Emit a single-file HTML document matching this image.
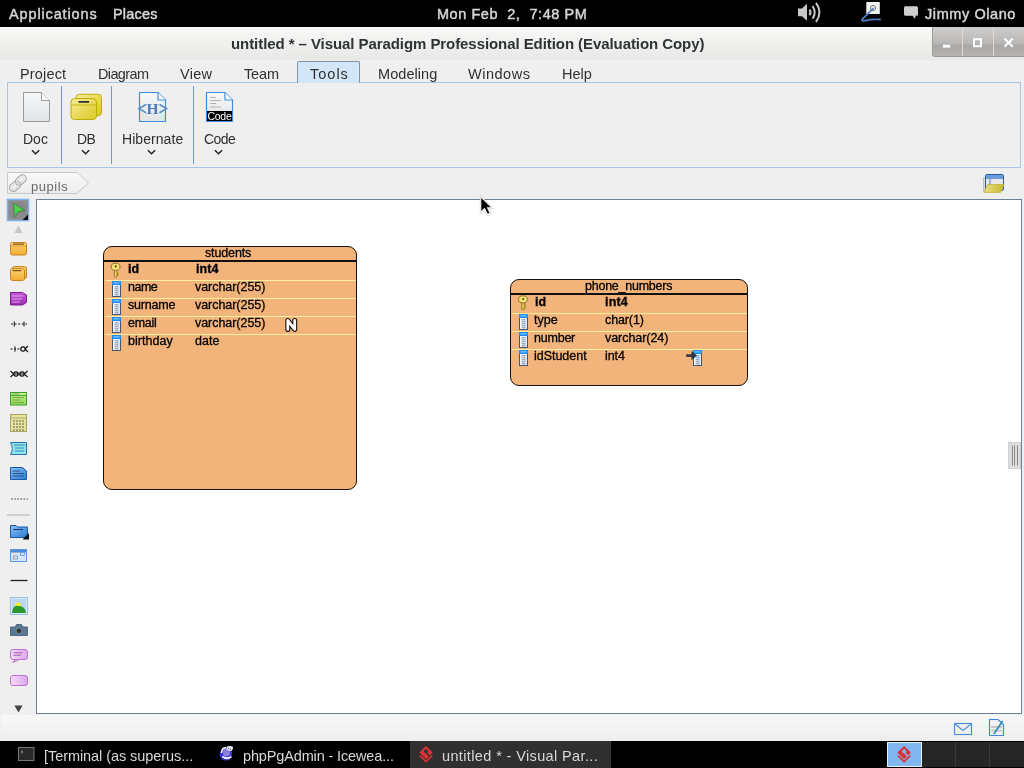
<!DOCTYPE html><html><head><meta charset="utf-8"><style>
*{margin:0;padding:0;box-sizing:border-box}
html,body{width:1024px;height:768px;overflow:hidden;background:#efefef;font-family:"Liberation Sans",sans-serif;position:relative}
.t{position:absolute;white-space:nowrap;will-change:transform}
.a{position:absolute}
svg{position:absolute;overflow:visible}
</style></head><body>
<div class="a" style="left:0;top:0;width:1024px;height:27px;background:#000"></div>
<div class="t" style="left:8.80px;top:7.00px;font-size:14.5px;line-height:14.5px;color:#d6d6d6;letter-spacing:0.864px;-webkit-text-stroke:0.45px #d6d6d6;">Applications</div>
<div class="t" style="left:113.30px;top:7.00px;font-size:14.5px;line-height:14.5px;color:#d6d6d6;letter-spacing:0.200px;-webkit-text-stroke:0.45px #d6d6d6;">Places</div>
<div class="t" style="left:436.70px;top:7.00px;font-size:14.5px;line-height:14.5px;color:#d6d6d6;letter-spacing:0.542px;white-space:pre;-webkit-text-stroke:0.45px #d6d6d6;">Mon Feb  2,  7:48 PM</div>
<div class="t" style="left:924.60px;top:7.00px;font-size:14.5px;line-height:14.5px;color:#d6d6d6;letter-spacing:0.580px;-webkit-text-stroke:0.45px #d6d6d6;">Jimmy Olano</div>
<svg style="left:0;top:0" width="1024" height="27">
<path d="M798 8.5 H802 L807 3.8 V20.8 L802 16.2 H798 Z" fill="#c8c8c8"/>
<path d="M809.5 9.5 Q811.5 12.3 809.5 15.2" stroke="#c8c8c8" stroke-width="2" fill="none"/>
<path d="M812.5 6 Q817 12.3 812.5 18.8" stroke="#c8c8c8" stroke-width="2" fill="none"/>
<path d="M816 2.8 Q823 12.3 816 21.8" stroke="#c8c8c8" stroke-width="2" fill="none"/>
<rect x="866.3" y="2" width="13.5" height="12" fill="#f2f2f2"/>
<circle cx="873" cy="8" r="2.6" fill="none" stroke="#777" stroke-width="1"/>
<path d="M873 8.5 Q868 14 862.5 19 Q861 21 864 20.8 Q872 19 880 19.5" stroke="#4f7ec0" stroke-width="1.8" fill="none" stroke-linecap="round"/>
<path d="M905.5 6.2 H916.5 Q918 6.2 918 7.7 V14.2 Q918 15.7 916.5 15.7 H915.5 L915 19 L912.5 15.7 H905.5 Q904 15.7 904 14.2 V7.7 Q904 6.2 905.5 6.2 Z" fill="#cfcfcf"/>
</svg>
<div class="a" style="left:0;top:27px;width:1024px;height:33px;background:linear-gradient(#f9f9f8,#f1f1f0 40%,#e9e8e7)"></div>
<div class="t" style="left:230.50px;top:36.00px;font-size:15px;line-height:15px;color:#2e3436;font-weight:bold;letter-spacing:-0.071px;">untitled * – Visual Paradigm Professional Edition (Evaluation Copy)</div>
<div class="a" style="left:932px;top:27px;width:92px;height:30px;border-bottom-left-radius:4px;background:linear-gradient(#cfcecc,#b8b7b5 55%,#a9a8a6 60%,#b5b4b2);box-shadow:inset 1px 0 0 #9a9997, inset 0 -1px 0 #9a9997"></div>
<div class="a" style="left:962px;top:27px;width:1px;height:29px;background:#dcdbd9"></div>
<div class="a" style="left:993px;top:27px;width:1px;height:29px;background:#dcdbd9"></div>
<svg style="left:0;top:0" width="1024" height="60">
<rect x="943" y="44.8" width="7.2" height="2.8" fill="#fff"/>
<rect x="974" y="39.2" width="7" height="7" fill="none" stroke="#fff" stroke-width="2"/>
<path d="M1004.5 38.5 L1012.7 46.7 M1012.7 38.5 L1004.5 46.7" stroke="#fff" stroke-width="2"/>
</svg>
<div class="a" style="left:7px;top:82px;width:1014px;height:86px;border:1px solid #a9c6e6;"></div>
<div class="a" style="left:297px;top:61px;width:63px;height:22px;background:#d3e6f8;border:1px solid #7d93ab;border-bottom:none;border-radius:2px 2px 0 0"></div>
<div class="t" style="left:19.90px;top:67.00px;font-size:14.5px;line-height:14.5px;color:#303030;letter-spacing:0.167px;">Project</div>
<div class="t" style="left:98.20px;top:67.00px;font-size:14.5px;line-height:14.5px;color:#303030;letter-spacing:-0.633px;">Diagram</div>
<div class="t" style="left:180.20px;top:67.00px;font-size:14.5px;line-height:14.5px;color:#303030;letter-spacing:0.267px;">View</div>
<div class="t" style="left:243.80px;top:67.00px;font-size:14.5px;line-height:14.5px;color:#303030;letter-spacing:-0.167px;">Team</div>
<div class="t" style="left:309.50px;top:67.00px;font-size:14.5px;line-height:14.5px;color:#303030;letter-spacing:1.000px;">Tools</div>
<div class="t" style="left:378.20px;top:67.00px;font-size:14.5px;line-height:14.5px;color:#303030;letter-spacing:0.057px;">Modeling</div>
<div class="t" style="left:468.40px;top:67.00px;font-size:14.5px;line-height:14.5px;color:#303030;letter-spacing:0.517px;">Windows</div>
<div class="t" style="left:562.20px;top:67.00px;font-size:14.5px;line-height:14.5px;color:#303030;letter-spacing:0.033px;">Help</div>
<div class="a" style="left:61px;top:86px;width:1px;height:78px;background:#7397d3"></div>
<div class="a" style="left:111px;top:86px;width:1px;height:78px;background:#7397d3"></div>
<div class="a" style="left:193px;top:86px;width:1px;height:78px;background:#7397d3"></div>
<div class="t" style="left:23.40px;top:132.00px;font-size:14px;line-height:14px;color:#303030;">Doc</div>
<div class="t" style="left:76.70px;top:132.00px;font-size:14px;line-height:14px;color:#303030;letter-spacing:-0.700px;">DB</div>
<div class="t" style="left:121.60px;top:132.00px;font-size:14px;line-height:14px;color:#303030;letter-spacing:0.062px;">Hibernate</div>
<div class="t" style="left:203.70px;top:132.00px;font-size:14px;line-height:14px;color:#303030;letter-spacing:-0.567px;">Code</div>
<svg style="left:0;top:0" width="1024" height="170"><path d="M32.0 150.3 L35.6 153.8 L39.2 150.3" stroke="#222" stroke-width="1.5" fill="none"/><path d="M82.0 150.3 L85.6 153.8 L89.19999999999999 150.3" stroke="#222" stroke-width="1.5" fill="none"/><path d="M147.9 150.3 L151.5 153.8 L155.1 150.3" stroke="#222" stroke-width="1.5" fill="none"/><path d="M214.9 150.3 L218.5 153.8 L222.1 150.3" stroke="#222" stroke-width="1.5" fill="none"/></svg>
<svg style="left:0;top:0" width="1024" height="170">
<defs>
<linearGradient id="gdoc" x1="0" y1="0" x2="0" y2="1"><stop offset="0" stop-color="#f7f8fa"/><stop offset="1" stop-color="#e2e3e4"/></linearGradient>
<linearGradient id="gdb" x1="0" y1="0" x2="1" y2="1"><stop offset="0" stop-color="#f6ec9a"/><stop offset="1" stop-color="#dcc820"/></linearGradient>
</defs>
<path d="M23.5 92.5 H41.5 L49.5 100.5 V121.5 H23.5 Z" fill="url(#gdoc)" stroke="#9a9a9a" stroke-width="1"/>
<path d="M41.5 92.5 V100.5 H49.5" fill="#fafafa" stroke="#9a9a9a" stroke-width="1"/>
<!-- DB -->
<rect x="76" y="94.3" width="25.5" height="21.5" rx="3.5" fill="url(#gdb)" stroke="#bfae08" stroke-width="1"/>
<rect x="71" y="98.5" width="25.5" height="21" rx="3.5" fill="url(#gdb)" stroke="#bfae08" stroke-width="1"/>
<line x1="71" y1="105" x2="96.5" y2="105" stroke="#c9b614" stroke-width="1"/>
<rect x="78.5" y="101" width="10.5" height="1.8" fill="#333"/>
<!-- Hibernate -->
<path d="M139.5 92.5 H158 L165.5 100 V121.5 H139.5 Z" fill="url(#gdoc)" stroke="#3f8fe0" stroke-width="1.2"/>
<path d="M158 92.5 V100 H165.5" fill="#fafafa" stroke="#3f8fe0" stroke-width="1.2"/>
<path d="M146 104.5 L139 108.6 L146 112.7 M159.5 104.5 L166.5 108.6 L159.5 112.7" stroke="#5a8ac4" stroke-width="1.6" fill="none"/>
<text x="152.6" y="113.8" font-family="Liberation Serif" font-weight="bold" font-size="15.5" fill="#4a7cbf" text-anchor="middle">H</text>
<!-- Code -->
<path d="M206.5 92.5 H225 L232.5 100 V121.5 H206.5 Z" fill="url(#gdoc)" stroke="#3f8fe0" stroke-width="1.2"/>
<path d="M225 92.5 V100 H232.5" fill="#fafafa" stroke="#3f8fe0" stroke-width="1.2"/>
<path d="M210 97.5 H216 M210 100.5 H221 M210 103.5 H216 M210 107 H221" stroke="#aaa" stroke-width="0.9"/>
<rect x="207" y="111" width="25" height="10" fill="#000"/>
<text x="219.5" y="120" font-family="Liberation Sans" font-size="10.5" fill="#fff" text-anchor="middle" letter-spacing="-0.3">Code</text>
</svg>
<svg style="left:0;top:0" width="1024" height="200">
<defs><linearGradient id="gbc" x1="0" y1="0" x2="0" y2="1"><stop offset="0" stop-color="#fafafa"/><stop offset="1" stop-color="#ececec"/></linearGradient></defs>
<path d="M7.5 172.5 H77 L88.5 183 L77 193.5 H7.5 Z" fill="url(#gbc)" stroke="#c4c8cc" stroke-width="1"/>
<g fill="none" stroke="#a4a4a4" stroke-width="1.1">
<rect x="14.8" y="176.3" width="12" height="7.6" rx="3.8" transform="rotate(-40 20.8 180.1)"/>
<rect x="9" y="182.4" width="12" height="7.6" rx="3.8" transform="rotate(-40 15 186.2)"/>
</g>
<g fill="none" stroke="#d0d0d0" stroke-width="0.8">
<rect x="16.8" y="178.3" width="8" height="3.6" rx="1.8" transform="rotate(-40 20.8 180.1)"/>
<rect x="11" y="184.4" width="8" height="3.6" rx="1.8" transform="rotate(-40 15 186.2)"/>
</g>
</svg>
<div class="t" style="left:31.40px;top:180.00px;font-size:13px;line-height:13px;color:#6a6a6a;letter-spacing:0.560px;height:21px;overflow:hidden;">pupils</div>
<svg style="left:0;top:0" width="1024" height="200">
<defs><linearGradient id="gfy" x1="0" y1="0" x2="1" y2="0"><stop offset="0" stop-color="#e9df7a"/><stop offset="1" stop-color="#c9b830"/></linearGradient></defs>
<rect x="985.5" y="174.5" width="18" height="16" rx="1.5" fill="#e8e8e8" stroke="#2a5d9a" stroke-width="1"/>
<rect x="986" y="175" width="17" height="4" fill="#6d9ad8"/>
<line x1="990" y1="179" x2="990" y2="190" stroke="#2a5d9a" stroke-width="0.8"/>
<path d="M984 192.5 L987.5 184.5 H1004 L1000.5 192.5 Z" fill="url(#gfy)" stroke="#b8a820" stroke-width="0.6"/>
<line x1="983.8" y1="177" x2="983.8" y2="192" stroke="#999" stroke-width="0.8"/>
</svg>
<div class="a" style="left:36px;top:199px;width:986px;height:515px;background:#fff;border:1px solid #6e8093"></div>
<div class="a" style="left:1008px;top:442px;width:13px;height:27px;background:#dedede;border:1px solid #d0d0d0"></div>
<svg style="left:0;top:0" width="1024" height="768"><path d="M1012.4 445.5 V465.5 M1014.5 445.5 V465.5 M1017.5 445.5 V465.5" stroke="#888" stroke-width="1"/></svg>
<svg style="left:0;top:0" width="1024" height="768"><defs>
<linearGradient id="gor" x1="0" y1="0" x2="0" y2="1"><stop offset="0" stop-color="#fcd27a"/><stop offset="1" stop-color="#f2ad2e"/></linearGradient>
<linearGradient id="gpu" x1="0" y1="0" x2="0" y2="1"><stop offset="0" stop-color="#c85ad8"/><stop offset="1" stop-color="#9d2cb0"/></linearGradient>
<linearGradient id="ggr" x1="0" y1="0" x2="0" y2="1"><stop offset="0" stop-color="#c8f090"/><stop offset="1" stop-color="#8cd850"/></linearGradient>
<linearGradient id="gbl" x1="0" y1="0" x2="1" y2="1"><stop offset="0" stop-color="#86c0f5"/><stop offset="1" stop-color="#2a7ad0"/></linearGradient>
<linearGradient id="gpk" x1="0" y1="0" x2="1" y2="0"><stop offset="0" stop-color="#f4dcf8"/><stop offset="1" stop-color="#dca8ea"/></linearGradient>
<linearGradient id="ggrn" x1="0" y1="0" x2="0" y2="1"><stop offset="0" stop-color="#ffffff"/><stop offset="1" stop-color="#50d050"/></linearGradient>
</defs><rect x="7.5" y="199.5" width="21" height="21" fill="#8a8a8a" stroke="#7fb3ee" stroke-width="1.6"/><path d="M13.5 203 L25 210.5 L18.5 211.5 L14.5 217.5 Z" fill="#4fd04f" stroke="#2c7a2c" stroke-width="0.7"/><path d="M28 214.5 V220 H22.5 Z" fill="#111"/><path d="M14.4 233 L18.5 225.5 L22.6 233 Z" fill="#c6c6c6"/><rect x="10.5" y="242.5" width="16" height="12.5" rx="2" fill="url(#gor)" stroke="#c98420" stroke-width="1"/><line x1="11" y1="246" x2="26" y2="246" stroke="#d8962a" stroke-width="0.8"/><rect x="13" y="243.5" width="11" height="1.2" fill="#7a5010"/><rect x="12.5" y="266.5" width="14" height="12" rx="2" fill="url(#gor)" stroke="#c98420" stroke-width="1"/><rect x="10.5" y="268.5" width="14" height="12" rx="2" fill="url(#gor)" stroke="#c98420" stroke-width="1"/><rect x="12.5" y="270" width="9" height="1.2" fill="#7a5010"/><path d="M10.5 292.5 H22.5 L26.5 295 V302.5 L22.5 305 H10.5 Z" fill="url(#gpu)" stroke="#7a1f8c" stroke-width="1"/><path d="M12 296 H23 M12 299 H22 M12 302 H20" stroke="#e0b0ea" stroke-width="0.9"/><path d="M11 324 H27" stroke="#111" stroke-width="1" stroke-dasharray="2,1.6"/><path d="M14.3 321.5 V326.5 M24 321.5 V326.5" stroke="#111" stroke-width="1"/><path d="M10.5 349 H20" stroke="#111" stroke-width="1.1" stroke-dasharray="2,1.5"/><path d="M15 346.3 V351.7" stroke="#111" stroke-width="1"/><circle cx="23" cy="349" r="2.2" fill="none" stroke="#111" stroke-width="1.2"/><path d="M25 349 L28 346 M25 349 L28 352" stroke="#111" stroke-width="1.1"/><path d="M10.5 346 L13.5 374 M10.5 352 L13.5 374" stroke="none"/><circle cx="16" cy="374" r="2.2" fill="none" stroke="#111" stroke-width="1.2"/><circle cx="22" cy="374" r="2.2" fill="none" stroke="#111" stroke-width="1.2"/><path d="M10.5 371 L13.8 374 L10.5 377 M27.5 371 L24.2 374 L27.5 377 M13.8 374 H24.2" stroke="#111" stroke-width="1.1" fill="none"/><rect x="10.5" y="392.5" width="16" height="12.5" fill="url(#ggr)" stroke="#3aa030" stroke-width="1"/><path d="M11 395.5 H26" stroke="#3aa030" stroke-width="0.9"/><path d="M12.5 394 H19 M12.5 397.5 H24 M12.5 400 H20 M12.5 402.5 H24" stroke="#6a9a40" stroke-width="0.8"/><rect x="10.5" y="414.5" width="16" height="17" fill="#e6e2a0" stroke="#a8a460" stroke-width="1"/><path d="M11 418 H26" stroke="#a8a460" stroke-width="0.9"/><path d="M13 421 H24 M13 424 H24 M13 427 H24 M13 430 H24" stroke="#8f8d60" stroke-width="1.3" stroke-dasharray="2,1"/><path d="M10.5 442.5 H26.5 V454.5 H10.5 Q14 448.5 10.5 442.5 Z" fill="#8ee4ea" stroke="#2a70b0" stroke-width="1"/><path d="M14 445 H25 M15 448 H24 M15 451 H24" stroke="#2a70b0" stroke-width="0.8"/><path d="M10.5 467.5 H22.5 L26.5 471 V479.5 H10.5 Z" fill="url(#gbl)" stroke="#1a58a8" stroke-width="1"/><path d="M12.5 471 H20 M12.5 473.5 H24 M12.5 476 H24" stroke="#224a80" stroke-width="0.9"/><path d="M11 499 H28" stroke="#555" stroke-width="1" stroke-dasharray="1.8,1.3"/><rect x="7" y="514" width="23" height="2" fill="#cfcfcf"/><path d="M10.5 525.5 H16 L17.5 527 H27.5 V537.5 H10.5 Z" fill="url(#gbl)" stroke="#1a58a8" stroke-width="1"/><path d="M13.5 529.5 H23" stroke="#1a3060" stroke-width="1"/><path d="M29 533 V539.5 H22.5 Z" fill="#111"/><rect x="10.5" y="549.5" width="16" height="12" fill="#d4e6f8" stroke="#5a9ae0" stroke-width="1"/><rect x="11" y="550" width="15" height="2.5" fill="#4a8ad8"/><rect x="13.5" y="556" width="4" height="3" fill="none" stroke="#6a9ad0" stroke-width="0.8"/><rect x="20.5" y="552.5" width="4" height="3" fill="none" stroke="#6a9ad0" stroke-width="0.8"/><path d="M10.5 580.5 H27.5" stroke="#222" stroke-width="1.3"/><rect x="10.5" y="597.5" width="17" height="17" fill="#d8e8f8" stroke="#9ac0e8" stroke-width="1"/><rect x="12" y="599" width="14" height="14" fill="#bcd6f0"/><circle cx="18" cy="605.5" r="3" fill="#f0f020"/><path d="M12 613 Q13 604 19 606 Q25 606 26 613 Z" fill="#2a9a30"/><path d="M10.5 627 H15 L16.5 624.5 H21.5 L23 627 H27.5 V635.5 H10.5 Z" fill="#5a7896" stroke="#3e5670" stroke-width="0.8"/><circle cx="19" cy="630.8" r="2.8" fill="#333" stroke="#8aa" stroke-width="0.6"/><rect x="10.5" y="649.5" width="17" height="10" rx="2.5" fill="url(#gpk)" stroke="#c070d8" stroke-width="1"/><path d="M13.5 652.8 H22.5 M13.5 655.3 H21" stroke="#8a4a9a" stroke-width="0.8"/><path d="M15.5 659.5 L12.5 662.5 L18.5 660" stroke="#c070d8" stroke-width="1" fill="url(#gpk)"/><rect x="10.5" y="675.5" width="17" height="10" rx="2.5" fill="url(#gpk)" stroke="#c070d8" stroke-width="1"/><path d="M14.4 705.6 L22.6 705.6 L18.5 712.6 Z" fill="#444"/></svg>
<div class="a" style="left:103px;top:246px;width:254px;height:244px;background:#f3b47b;border:1.5px solid #111;border-radius:9px"></div>
<div class="a" style="left:103px;top:260px;width:254px;height:1.5px;background:#111"></div>
<div class="a" style="left:104.5px;top:280px;width:251px;height:1px;background:#fdf0a0"></div>
<div class="a" style="left:104.5px;top:298px;width:251px;height:1px;background:#fdf0a0"></div>
<div class="a" style="left:104.5px;top:316px;width:251px;height:1px;background:#fdf0a0"></div>
<div class="a" style="left:104.5px;top:334px;width:251px;height:1px;background:#fdf0a0"></div>
<div class="a" style="left:510px;top:279px;width:238px;height:107px;background:#f3b47b;border:1.5px solid #111;border-radius:9px"></div>
<div class="a" style="left:510px;top:293px;width:238px;height:1.5px;background:#111"></div>
<div class="a" style="left:511.5px;top:313px;width:235px;height:1px;background:#fdf0a0"></div>
<div class="a" style="left:511.5px;top:331px;width:235px;height:1px;background:#fdf0a0"></div>
<div class="a" style="left:511.5px;top:349px;width:235px;height:1px;background:#fdf0a0"></div>
<div class="t" style="left:205.40px;top:247.00px;font-size:12.5px;line-height:12.5px;color:#000;letter-spacing:-0.129px;-webkit-text-stroke:0.3px #000;">students</div>
<div class="t" style="left:127.70px;top:263.00px;font-size:12.5px;line-height:12.5px;color:#000;font-weight:bold;-webkit-text-stroke:0.3px #000;">id</div>
<div class="t" style="left:195.90px;top:263.00px;font-size:12.5px;line-height:12.5px;color:#000;font-weight:bold;letter-spacing:0.100px;-webkit-text-stroke:0.3px #000;">int4</div>
<div class="t" style="left:127.60px;top:281.00px;font-size:12.5px;line-height:12.5px;color:#000;letter-spacing:-0.500px;-webkit-text-stroke:0.3px #000;">name</div>
<div class="t" style="left:195.30px;top:281.00px;font-size:12.5px;line-height:12.5px;color:#000;letter-spacing:-0.045px;-webkit-text-stroke:0.3px #000;">varchar(255)</div>
<div class="t" style="left:127.60px;top:299.00px;font-size:12.5px;line-height:12.5px;color:#000;letter-spacing:-0.200px;-webkit-text-stroke:0.3px #000;">surname</div>
<div class="t" style="left:195.30px;top:299.00px;font-size:12.5px;line-height:12.5px;color:#000;letter-spacing:-0.045px;-webkit-text-stroke:0.3px #000;">varchar(255)</div>
<div class="t" style="left:127.60px;top:317.00px;font-size:12.5px;line-height:12.5px;color:#000;letter-spacing:-0.250px;-webkit-text-stroke:0.3px #000;">email</div>
<div class="t" style="left:195.30px;top:317.00px;font-size:12.5px;line-height:12.5px;color:#000;letter-spacing:-0.045px;-webkit-text-stroke:0.3px #000;">varchar(255)</div>
<div class="t" style="left:127.60px;top:335.00px;font-size:12.5px;line-height:12.5px;color:#000;letter-spacing:0.057px;-webkit-text-stroke:0.3px #000;">birthday</div>
<div class="t" style="left:195.30px;top:335.00px;font-size:12.5px;line-height:12.5px;color:#000;-webkit-text-stroke:0.3px #000;">date</div>
<div class="t" style="left:584.60px;top:280.00px;font-size:12.5px;line-height:12.5px;color:#000;letter-spacing:-0.242px;-webkit-text-stroke:0.3px #000;">phone_numbers</div>
<div class="t" style="left:534.60px;top:296.00px;font-size:12.5px;line-height:12.5px;color:#000;font-weight:bold;-webkit-text-stroke:0.3px #000;">id</div>
<div class="t" style="left:605.40px;top:296.00px;font-size:12.5px;line-height:12.5px;color:#000;font-weight:bold;letter-spacing:0.200px;-webkit-text-stroke:0.3px #000;">int4</div>
<div class="t" style="left:534.30px;top:314.00px;font-size:12.5px;line-height:12.5px;color:#000;letter-spacing:0.033px;-webkit-text-stroke:0.3px #000;">type</div>
<div class="t" style="left:605.40px;top:314.00px;font-size:12.5px;line-height:12.5px;color:#000;letter-spacing:-0.117px;-webkit-text-stroke:0.3px #000;">char(1)</div>
<div class="t" style="left:534.30px;top:332.00px;font-size:12.5px;line-height:12.5px;color:#000;letter-spacing:-0.220px;-webkit-text-stroke:0.3px #000;">number</div>
<div class="t" style="left:605.40px;top:332.00px;font-size:12.5px;line-height:12.5px;color:#000;letter-spacing:-0.050px;-webkit-text-stroke:0.3px #000;">varchar(24)</div>
<div class="t" style="left:534.30px;top:350.00px;font-size:12.5px;line-height:12.5px;color:#000;letter-spacing:-0.025px;-webkit-text-stroke:0.3px #000;">idStudent</div>
<div class="t" style="left:605.40px;top:350.00px;font-size:12.5px;line-height:12.5px;color:#000;letter-spacing:-0.067px;-webkit-text-stroke:0.3px #000;">int4</div>
<svg style="left:0;top:0" width="1024" height="768"><defs>
<linearGradient id="gkey" x1="0" y1="0" x2="1" y2="0"><stop offset="0" stop-color="#fff6b0"/><stop offset="1" stop-color="#d0b020"/></linearGradient>
<linearGradient id="gcol" x1="0" y1="0" x2="1" y2="0"><stop offset="0" stop-color="#ffffff"/><stop offset="1" stop-color="#dfe4ee"/></linearGradient>
</defs><g transform="translate(111.2,263.2)"><path d="M3.2 5.5 V13.6 Q4.4 14.6 5.6 13.6 V12.4 H6.6 V11.2 H5.6 V10.2 H6.6 V9 H5.6 V5.5 Z" fill="#f3d63c" stroke="#7a6a2a" stroke-width="0.8"/><ellipse cx="4.4" cy="3.6" rx="4.4" ry="3.6" fill="#f6e070" stroke="#7a6a2a" stroke-width="0.9"/><circle cx="4.6" cy="3.2" r="1.1" fill="#5a4a18"/></g><g transform="translate(112,281)"><rect x="0.5" y="0.5" width="8" height="15" fill="url(#gcol)" stroke="#46566e" stroke-width="1"/><rect x="0" y="0" width="9" height="4" fill="#1e8cf0"/><rect x="1.5" y="1" width="6" height="1.6" fill="#6ab8f8"/><path d="M2.5 5.8 H6.5 M2.5 7.8 H6.5 M2.5 9.8 H6.5 M2.5 11.8 H6.5 M2.5 13.8 H6.5" stroke="#7088a8" stroke-width="0.9"/></g><g transform="translate(112,299)"><rect x="0.5" y="0.5" width="8" height="15" fill="url(#gcol)" stroke="#46566e" stroke-width="1"/><rect x="0" y="0" width="9" height="4" fill="#1e8cf0"/><rect x="1.5" y="1" width="6" height="1.6" fill="#6ab8f8"/><path d="M2.5 5.8 H6.5 M2.5 7.8 H6.5 M2.5 9.8 H6.5 M2.5 11.8 H6.5 M2.5 13.8 H6.5" stroke="#7088a8" stroke-width="0.9"/></g><g transform="translate(112,317)"><rect x="0.5" y="0.5" width="8" height="15" fill="url(#gcol)" stroke="#46566e" stroke-width="1"/><rect x="0" y="0" width="9" height="4" fill="#1e8cf0"/><rect x="1.5" y="1" width="6" height="1.6" fill="#6ab8f8"/><path d="M2.5 5.8 H6.5 M2.5 7.8 H6.5 M2.5 9.8 H6.5 M2.5 11.8 H6.5 M2.5 13.8 H6.5" stroke="#7088a8" stroke-width="0.9"/></g><g transform="translate(112,335)"><rect x="0.5" y="0.5" width="8" height="15" fill="url(#gcol)" stroke="#46566e" stroke-width="1"/><rect x="0" y="0" width="9" height="4" fill="#1e8cf0"/><rect x="1.5" y="1" width="6" height="1.6" fill="#6ab8f8"/><path d="M2.5 5.8 H6.5 M2.5 7.8 H6.5 M2.5 9.8 H6.5 M2.5 11.8 H6.5 M2.5 13.8 H6.5" stroke="#7088a8" stroke-width="0.9"/></g><g transform="translate(518.6,295.8)"><path d="M3.2 5.5 V13.6 Q4.4 14.6 5.6 13.6 V12.4 H6.6 V11.2 H5.6 V10.2 H6.6 V9 H5.6 V5.5 Z" fill="#f3d63c" stroke="#7a6a2a" stroke-width="0.8"/><ellipse cx="4.4" cy="3.6" rx="4.4" ry="3.6" fill="#f6e070" stroke="#7a6a2a" stroke-width="0.9"/><circle cx="4.6" cy="3.2" r="1.1" fill="#5a4a18"/></g><g transform="translate(519,314)"><rect x="0.5" y="0.5" width="8" height="15" fill="url(#gcol)" stroke="#46566e" stroke-width="1"/><rect x="0" y="0" width="9" height="4" fill="#1e8cf0"/><rect x="1.5" y="1" width="6" height="1.6" fill="#6ab8f8"/><path d="M2.5 5.8 H6.5 M2.5 7.8 H6.5 M2.5 9.8 H6.5 M2.5 11.8 H6.5 M2.5 13.8 H6.5" stroke="#7088a8" stroke-width="0.9"/></g><g transform="translate(519,332)"><rect x="0.5" y="0.5" width="8" height="15" fill="url(#gcol)" stroke="#46566e" stroke-width="1"/><rect x="0" y="0" width="9" height="4" fill="#1e8cf0"/><rect x="1.5" y="1" width="6" height="1.6" fill="#6ab8f8"/><path d="M2.5 5.8 H6.5 M2.5 7.8 H6.5 M2.5 9.8 H6.5 M2.5 11.8 H6.5 M2.5 13.8 H6.5" stroke="#7088a8" stroke-width="0.9"/></g><g transform="translate(519,350)"><rect x="0.5" y="0.5" width="8" height="15" fill="url(#gcol)" stroke="#46566e" stroke-width="1"/><rect x="0" y="0" width="9" height="4" fill="#1e8cf0"/><rect x="1.5" y="1" width="6" height="1.6" fill="#6ab8f8"/><path d="M2.5 5.8 H6.5 M2.5 7.8 H6.5 M2.5 9.8 H6.5 M2.5 11.8 H6.5 M2.5 13.8 H6.5" stroke="#7088a8" stroke-width="0.9"/></g><path d="M287.8 329.4 V320.4 L294.7 329.4 V320.4" stroke="#111" stroke-width="5" fill="none" stroke-linejoin="round" stroke-linecap="round"/><path d="M287.8 329.4 V320.4 L294.7 329.4 V320.4" stroke="#fff" stroke-width="2.8" fill="none" stroke-linejoin="round" stroke-linecap="round"/><g transform="translate(693,350)"><rect x="0.5" y="0.5" width="8" height="15" fill="url(#gcol)" stroke="#46566e" stroke-width="1"/><rect x="0" y="0" width="9" height="4" fill="#1e8cf0"/><rect x="1.5" y="1" width="6" height="1.6" fill="#6ab8f8"/><path d="M2.5 5.8 H6.5 M2.5 7.8 H6.5 M2.5 9.8 H6.5 M2.5 11.8 H6.5 M2.5 13.8 H6.5" stroke="#7088a8" stroke-width="0.9"/></g><path d="M686.2 355.6 H692" stroke="#2a3440" stroke-width="2.6"/><path d="M691.5 351 L697 355.6 L691.5 360.2 Z" fill="#2a3440"/></svg>
<div class="a" style="left:1px;top:715px;width:1023px;height:26px;background:linear-gradient(#f8f8f8,#eeeeee)"></div>
<svg style="left:0;top:0" width="1024" height="768">
<rect x="954.5" y="723.5" width="17" height="11" fill="#f0f0f0" stroke="#4a90e2" stroke-width="1.2"/>
<path d="M955 724 L963 730.5 L971 724" fill="none" stroke="#4a90e2" stroke-width="1.1"/>
<path d="M989.5 719.5 H998 L1003.5 724.5 V735.5 H989.5 Z" fill="#f2f2f2" stroke="#3f8ae0" stroke-width="1.2"/>
<path d="M991 727 H1002 M991 730.5 H1002" stroke="#c8c8c8" stroke-width="2"/>
<path d="M994 734 L1002.5 721" stroke="#2a8ab0" stroke-width="1.6"/>
</svg>
<div class="a" style="left:0;top:741px;width:1024px;height:27px;background:#000"></div>
<div class="a" style="left:410px;top:741px;width:201px;height:27px;background:#303030"></div>
<div class="a" style="left:921px;top:742px;width:103px;height:25px;background:#262626"></div>
<div class="a" style="left:955px;top:742px;width:1px;height:25px;background:#3a3a3a"></div>
<div class="a" style="left:989px;top:742px;width:1px;height:25px;background:#3a3a3a"></div>
<div class="a" style="left:887px;top:742px;width:35px;height:25px;background:#82b6f0;border:1px solid #f0f0f0"></div>
<div class="t" style="left:44.00px;top:749.00px;font-size:14.5px;line-height:14.5px;color:#d8d8d8;letter-spacing:-0.065px;">[Terminal (as superus...</div>
<div class="t" style="left:242.50px;top:749.00px;font-size:14.5px;line-height:14.5px;color:#d8d8d8;letter-spacing:-0.143px;">phpPgAdmin - Icewea...</div>
<div class="t" style="left:441.90px;top:749.00px;font-size:14.5px;line-height:14.5px;color:#d8d8d8;letter-spacing:0.372px;">untitled * - Visual Par...</div>
<svg style="left:0;top:0" width="1024" height="768">
<rect x="18.5" y="747.5" width="15.5" height="13" fill="#2a2a2a" stroke="#777" stroke-width="1"/>
<path d="M21 750.5 L23 752 L21 753.5" stroke="#aaa" stroke-width="0.8" fill="none"/>
<circle cx="226" cy="754.3" r="6.3" fill="#3c34d0"/><ellipse cx="226.5" cy="752.5" rx="3.5" ry="4" fill="#8a7ee0"/>
<path d="M222.5 756.3 Q226.5 760 231.3 756.8" stroke="#f0f4ff" stroke-width="1.8" fill="none"/>
<path d="M221.5 753 Q221.5 748 226 747.6" stroke="#e8eeff" stroke-width="1.6" fill="none"/>
<path d="M226.5 746.8 Q229 745.6 232.5 746.5 Q233.8 748.5 231.5 751 Q228 751 226.5 748.8 Z" fill="#f4f6ff"/>
<circle cx="228.5" cy="748.3" r="0.6" fill="#333"/><circle cx="230.5" cy="749.2" r="0.6" fill="#333"/>
<g transform="translate(426,0)">
<path d="M0 746 L6.8 752.6 L0 759.2 L-6.8 752.6 Z" fill="#d83232"/>
<path d="M-6.2 755.6 L0 761.6 L6.2 755.6" stroke="#d83232" stroke-width="1.8" fill="none"/>
<circle cx="0" cy="751.3" r="2" fill="#333"/><path d="M0 752 L3.6 756.5" stroke="#333" stroke-width="1.5"/>
</g>
<g transform="translate(904.1,0)">
<path d="M0 746 L6.8 752.6 L0 759.2 L-6.8 752.6 Z" fill="#d83232"/>
<path d="M-6.2 755.6 L0 761.6 L6.2 755.6" stroke="#d83232" stroke-width="1.8" fill="none"/>
<circle cx="0" cy="751.3" r="2" fill="#82b6f0"/><path d="M0 752 L3.6 756.5" stroke="#82b6f0" stroke-width="1.5"/>
</g>
</svg>
<svg style="left:0;top:0" width="1024" height="768"><path d="M480.3 195.2 L480.3 213.6 L484.2 210.2 L487 216 L491.2 214.4 L488.6 208.8 L493.3 208.8 Z" fill="#fff" stroke="#bbb" stroke-width="0.5" stroke-linejoin="round"/><path d="M481.3 198 L481.3 211 L484.7 207.8 L487.8 213.8 L489.4 213.1 L486.7 207.2 L490.8 207.2 Z" fill="#000"/></svg>
</body></html>
